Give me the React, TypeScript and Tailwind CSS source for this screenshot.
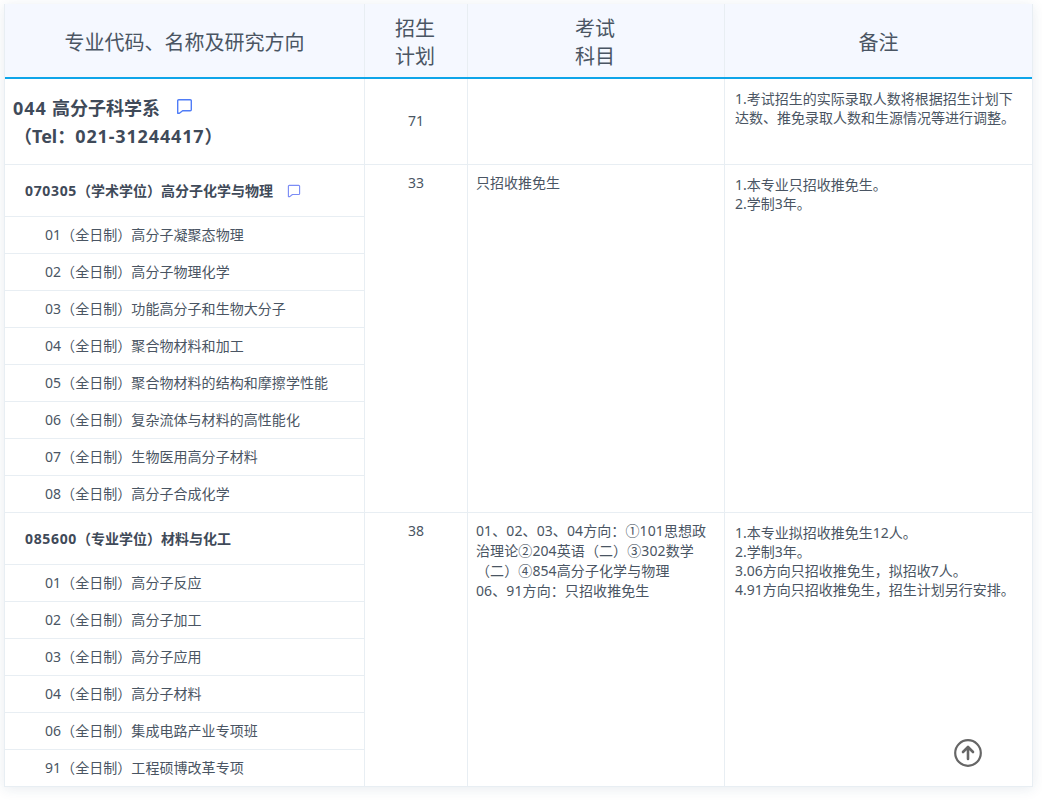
const font = "font-['Noto_Sans','Noto_Sans_CJK_SC',sans-serif]";

function ChatIcon({ size, color }: { size: number; color: string }) {
  return (
    <svg width={size} height={size} viewBox="0 0 16 16" fill="none" stroke={color} strokeWidth="1.3" strokeLinejoin="round">
      <path d="M2.6 1.6h10.8a1 1 0 0 1 1 1v8.4a1 1 0 0 1-1 1H6.2l-3 2.4H1.6V2.6a1 1 0 0 1 1-1z" />
    </svg>
  );
}

function SubRow({ text }: { text: string }) {
  return (
    <div className="h-[37px] pl-10 flex items-center border-t border-[#e8eef3] text-sm tracking-[0.05px] text-[#4a5563] whitespace-nowrap">
      {text}
    </div>
  );
}

function MajorRow({ code, text, icon }: { code: string; text: string; icon?: boolean }) {
  return (
    <div className="h-[51px] pl-5 flex items-center text-sm font-bold text-[#3f4a59] whitespace-nowrap">
      <span className="tracking-[0.65px]">{code}</span>
      {text}
      {icon && (
        <span className="ml-[14px]">
          <ChatIcon size={14} color="#7b8cf5" />
        </span>
      )}
    </div>
  );
}

const row1 = [
  "01（全日制）高分子凝聚态物理",
  "02（全日制）高分子物理化学",
  "03（全日制）功能高分子和生物大分子",
  "04（全日制）聚合物材料和加工",
  "05（全日制）聚合物材料的结构和摩擦学性能",
  "06（全日制）复杂流体与材料的高性能化",
  "07（全日制）生物医用高分子材料",
  "08（全日制）高分子合成化学",
];

const row2 = [
  "01（全日制）高分子反应",
  "02（全日制）高分子加工",
  "03（全日制）高分子应用",
  "04（全日制）高分子材料",
  "06（全日制）集成电路产业专项班",
  "91（全日制）工程硕博改革专项",
];

const cols = "grid grid-cols-[359px_103px_257px_308px]";
const cell = "border-l border-[#e8eef3]";

export default function App() {
  return (
    <div className={`${font} h-[803px] bg-white pt-1 pl-1 relative overflow-hidden`}>
      <div className="w-[1029px] border-x border-b border-[#e8eef3] shadow-[0_2px_12px_rgba(30,70,110,0.10)] bg-white">
        <div className={`${cols} h-[73px] bg-[#f5f8ff] text-xl leading-7 text-[#4a5563]`}>
          <div className="flex items-center justify-center pt-1">专业代码、名称及研究方向</div>
          <div className={`${cell} flex items-center justify-center text-center pt-1 pr-[2px]`}>招生<br />计划</div>
          <div className={`${cell} flex items-center justify-center text-center pt-1 pr-[2px]`}>考试<br />科目</div>
          <div className={`${cell} flex items-center justify-center pt-1`}>备注</div>
        </div>
        <div className="h-0.5 bg-[#0ea5e9]" />

        <div className={`${cols} h-[85px] text-sm text-[#4a5563]`}>
          <div className="pl-2 pt-[15px] text-lg leading-7 font-bold text-[#3f4a59] whitespace-nowrap">
            <div className="flex items-center">
              <span className="tracking-[1px]">044</span>
              <span className="ml-[5px]">高分子科学系</span>
              <span className="ml-4 -translate-y-[2px]">
                <ChatIcon size={17} color="#4f7cf7" />
              </span>
            </div>
            <div className="pl-[1px]">
              （Tel：<span className="tracking-[0.85px]">021-31244417</span>）
            </div>
          </div>
          <div className={`${cell} flex items-center justify-center pb-[2px]`}>71</div>
          <div className={cell} />
          <div className={`${cell} pl-[10px] pr-4 pt-[10px] leading-[19px]`}>
            1.考试招生的实际录取人数将根据招生计划下达数、推免录取人数和生源情况等进行调整。
          </div>
        </div>

        <div className={`${cols} border-t border-[#e8eef3] text-sm text-[#4a5563]`}>
          <div>
            <MajorRow code="070305" text="（学术学位）高分子化学与物理" icon />
            {row1.map((t) => (
              <SubRow key={t} text={t} />
            ))}
          </div>
          <div className={`${cell} pt-2 text-center leading-5`}>33</div>
          <div className={`${cell} pl-2 pt-2 leading-5`}>只招收推免生</div>
          <div className={`${cell} pl-[10px] pt-[10px] leading-[19px]`}>
            1.本专业只招收推免生。<br />2.学制3年。
          </div>
        </div>

        <div className={`${cols} border-t border-[#e8eef3] text-sm text-[#4a5563]`}>
          <div>
            <MajorRow code="085600" text="（专业学位）材料与化工" />
            {row2.map((t) => (
              <SubRow key={t} text={t} />
            ))}
          </div>
          <div className={`${cell} pt-2 text-center leading-5`}>38</div>
          <div className={`${cell} pl-2 pr-4 pt-2 leading-5 tracking-[0.1px]`}>
            01、02、03、04方向：①101思想政治理论②204英语（二）③302数学（二）④854高分子化学与物理<br />
            06、91方向：只招收推免生
          </div>
          <div className={`${cell} pl-[10px] pt-[10px] leading-[19px]`}>
            1.本专业拟招收推免生12人。<br />
            2.学制3年。<br />
            3.06方向只招收推免生，拟招收7人。<br />
            4.91方向只招收推免生，招生计划另行安排。
          </div>
        </div>
      </div>

      <div className="absolute left-[953px] top-[738px]">
        <svg width="30" height="30" viewBox="0 0 30 30" fill="none" stroke="#666666" strokeLinecap="round" strokeLinejoin="round">
          <circle cx="15" cy="15" r="12.8" strokeWidth="2.2" />
          <path d="M15 21V9.5M10 14l5-5 5 5" strokeWidth="2.6" />
        </svg>
      </div>
    </div>
  );
}
